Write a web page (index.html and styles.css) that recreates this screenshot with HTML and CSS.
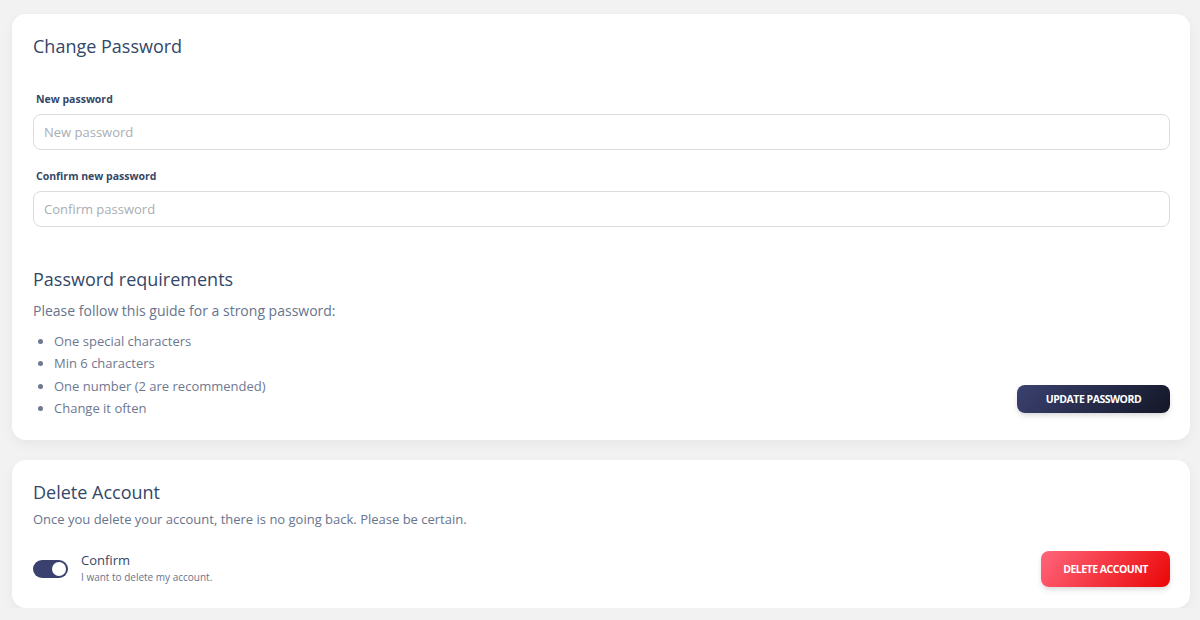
FILE: index.html
```html
<!DOCTYPE html>
<html lang="en">
<head>
    <meta charset="UTF-8">
    <meta name="viewport" content="width=device-width, initial-scale=1.0">
    <title>Account Settings</title>
    <link rel="stylesheet" href="styles.css">
</head>
<body>
    <div class="page">
        <div class="card">
            <h5 class="card-title">Change Password</h5>
            <div class="form-group">
                <label for="newPassword">New password</label>
                <input type="password" id="newPassword" placeholder="New password">
            </div>
            <div class="form-group">
                <label for="confirmPassword">Confirm new password</label>
                <input type="password" id="confirmPassword" placeholder="Confirm password">
            </div>
            <h5 class="requirements-title">Password requirements</h5>
            <p class="guide">Please follow this guide for a strong password:</p>
            <div class="requirements-row">
                <ul class="requirements">
                    <li>One special characters</li>
                    <li>Min 6 characters</li>
                    <li>One number (2 are recommended)</li>
                    <li>Change it often</li>
                </ul>
                <button class="btn btn-dark">Update password</button>
            </div>
        </div>

        <div class="card">
            <h5 class="card-title">Delete Account</h5>
            <p class="note">Once you delete your account, there is no going back. Please be certain.</p>
            <div class="delete-row">
                <div class="confirm">
                    <label class="switch">
                        <input type="checkbox" checked>
                        <span class="slider"></span>
                    </label>
                    <div class="confirm-text">
                        <span class="confirm-label">Confirm</span>
                        <span class="confirm-sub">I want to delete my account.</span>
                    </div>
                </div>
                <button class="btn btn-danger">Delete account</button>
            </div>
        </div>
    </div>
</body>
</html>
```

FILE: styles.css
```css
body {
    font-family: 'Open Sans', sans-serif;
    background: #f2f2f2;
    margin: 0;
    color: #344767;
}

.page {
    padding: 14px 10px 0 12px;
    display: flex;
    flex-direction: column;
    gap: 20px;
}

.card {
    background: #fff;
    border-radius: 14px;
    padding: 20px 20px 21px 21px;
    box-shadow: 0 4px 12px rgba(0, 0, 0, 0.05);
}

.card-title,
.requirements-title {
    font-size: 18px;
    font-weight: 500;
    line-height: 25px;
    margin: 0;
    color: #344767;
}

.card-title {
    margin-bottom: 32px;
}

.form-group {
    margin-bottom: 18px;
}

.form-group label {
    display: block;
    font-size: 10.5px;
    font-weight: 700;
    line-height: 16px;
    margin: 0 0 7px 3px;
    color: #344767;
}

.form-group input {
    width: 100%;
    height: 36px;
    box-sizing: border-box;
    border: 1px solid #d9dce0;
    border-radius: 8px;
    padding: 0 10px;
    font-family: 'Open Sans', sans-serif;
    font-size: 13px;
    color: #495057;
}

.form-group input::placeholder {
    color: #a8aeb5;
}

.requirements-title {
    margin-top: 40px;
}

.guide {
    font-size: 14px;
    line-height: 20px;
    color: #67748e;
    margin: 9px 0 9px;
}

.requirements-row {
    display: flex;
    justify-content: space-between;
    align-items: flex-end;
}

.requirements {
    margin: 0;
    padding-left: 21px;
    font-size: 13px;
    line-height: 22.3px;
    color: #6f7890;
}

.btn {
    border: none;
    border-radius: 8px;
    color: #fff;
    font-family: 'Open Sans', sans-serif;
    font-weight: 700;
    font-size: 10.5px;
    letter-spacing: -0.5px;
    text-transform: uppercase;
    cursor: pointer;
    box-shadow: 0 4px 7px -1px rgba(0, 0, 0, 0.11), 0 2px 4px -1px rgba(0, 0, 0, 0.07);
}

.btn-dark {
    background: linear-gradient(310deg, #141727, #3a416f);
    height: 28px;
    width: 153px;
    margin-bottom: 6px;
}

.btn-danger {
    background: linear-gradient(310deg, #ea0606, #ff667c);
    height: 36px;
    width: 129px;
}

.note {
    font-size: 13px;
    line-height: 19px;
    color: #67748e;
    margin: -27px 0 22px;
}

.delete-row {
    display: flex;
    justify-content: space-between;
    align-items: center;
}

.confirm {
    display: flex;
    align-items: center;
    gap: 13px;
}

.switch {
    position: relative;
    width: 35px;
    height: 18px;
    display: inline-block;
}

.switch input {
    opacity: 0;
    width: 0;
    height: 0;
}

.slider {
    position: absolute;
    inset: 0;
    background: #3a416f;
    border-radius: 10px;
}

.slider::before {
    content: "";
    position: absolute;
    top: 2px;
    right: 2px;
    width: 14px;
    height: 14px;
    border-radius: 50%;
    background: #fff;
}

.confirm-text {
    display: flex;
    flex-direction: column;
    margin-top: -1px;
}

.confirm-label {
    font-size: 13px;
    line-height: 18px;
    color: #344767;
}

.confirm-sub {
    font-size: 10px;
    line-height: 17px;
    color: #67748e;
}
```
